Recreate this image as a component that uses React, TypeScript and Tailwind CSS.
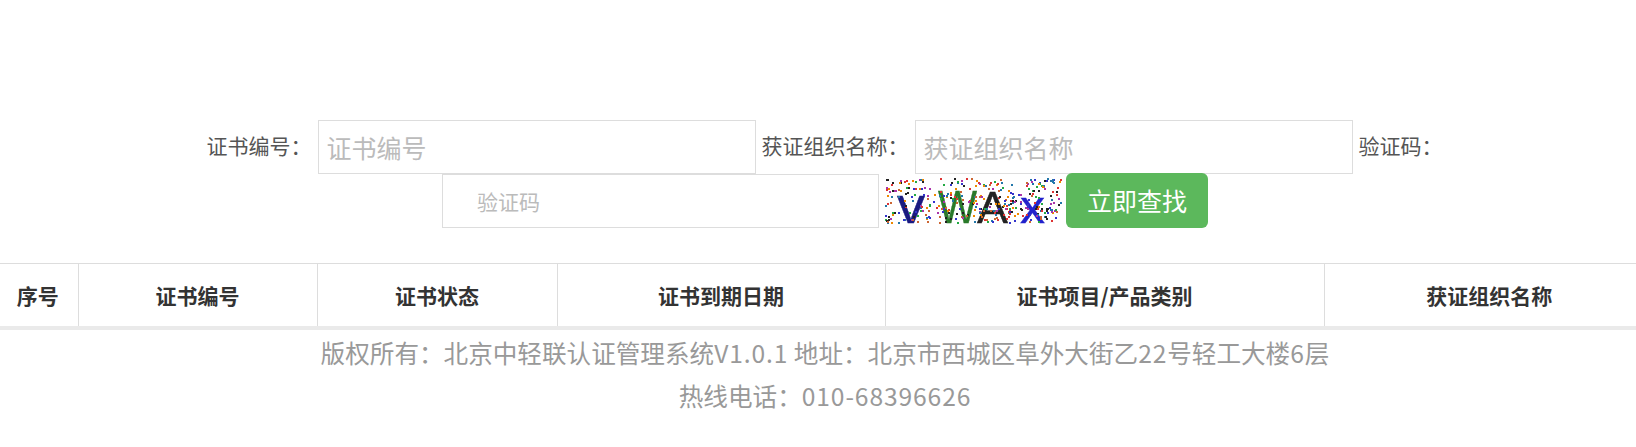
const dots: [number, number, string][] = (() => {
  const colors = ['#d33', '#27a', '#2a4', '#e80', '#a3a', '#222', '#33c', '#c63'];
  let s = 7;
  const r = () => ((s = (s * 16807) % 2147483647) / 2147483647);
  const out: [number, number, string][] = [];
  for (let i = 0; i < 360; i++) out.push([Math.floor(r() * 176), Math.floor(r() * 45), colors[Math.floor(r() * 8)]]);
  return out;
})();

function Captcha() {
  return (
    <svg width="177" height="46" viewBox="0 0 177 46" className="block shrink-0 self-center blur-[0.5px]">
      <g fontFamily="'Liberation Sans', sans-serif" strokeWidth="0.4">
        <text x="12" y="45" fill="#1a1a80" stroke="#1a1a80" fontSize="50" textLength="28" lengthAdjust="spacingAndGlyphs">v</text>
        <text x="53" y="45" fill="#2a7a2a" stroke="#2a7a2a" fontSize="46" textLength="39" lengthAdjust="spacingAndGlyphs">W</text>
        <text x="92" y="45" fill="#222" stroke="#222" fontSize="44" textLength="31" lengthAdjust="spacingAndGlyphs">A</text>
        <text x="135" y="45" fill="#2222cc" stroke="#2222cc" fontSize="46" textLength="25" lengthAdjust="spacingAndGlyphs">x</text>
      </g>
      {dots.map(([x, y, c], i) => (
        <rect key={i} x={x} y={y} width="2" height="2" fill={c} />
      ))}
    </svg>
  );
}

function Field({ label, placeholder, labelClass }: { label: string; placeholder: string; labelClass: string }) {
  return (
    <>
      <label className={`text-[21px] leading-[50px] h-[53px] whitespace-nowrap text-[#555] ${labelClass}`}>{label}</label>
      <input
        placeholder={placeholder}
        className="w-[438px] h-[54px] border border-[#ddd] px-2 text-[25px] placeholder:text-[#bbb] outline-none"
      />
    </>
  );
}

const cols = [
  ['序号', 'w-[78px] pr-[2px]'],
  ['证书编号', 'w-[239px]'],
  ['证书状态', 'w-[240px]'],
  ['证书到期日期', 'w-[328px]'],
  ['证书项目/产品类别', 'w-[439px]'],
  ['获证组织名称', 'w-[330px]'],
];

function Num({ children }: { children: string }) {
  return <span className="tracking-[0.9px]">{children}</span>;
}

export default function App() {
  return (
    <div className="w-[1636px] h-[447px] overflow-hidden bg-white font-['Noto_Sans_CJK_SC','Noto_Sans',sans-serif]">
      <form className="pt-[120px] flex flex-wrap justify-center h-[263px] content-start">
        <div className="flex ml-[34px]">
          <Field label={'证书编号\uFF1A'} placeholder="证书编号" labelClass="w-[111px]" />
          <Field label={'获证组织名称\uFF1A'} placeholder="获证组织名称" labelClass="w-[159px] pl-[6px]" />
          <label className="text-[21px] leading-[50px] w-[111px] pl-[6px] whitespace-nowrap text-[#555]">{'验证码\uFF1A'}</label>
        </div>
        <div className="flex ml-[14px]">
          <input
            placeholder="验证码"
            className="w-[437px] h-[54px] border border-[#ddd] pl-[34px] text-[21px] placeholder:text-[#bbb] outline-none"
          />
          <div className="ml-[6px] mr-[4px] flex">
            <Captcha />
          </div>
          <button type="button" className="w-[142px] h-[55px] -mt-px rounded-md bg-[#5cb85c] text-white text-[25px]">
            立即查找
          </button>
        </div>
      </form>
      <table className="w-[1654px] table-fixed border-collapse border-t border-[#ddd]">
        <thead>
          <tr className="h-[64px] border-b-[4px] border-[#eaeaea]">
            {cols.map(([t, w], i) => (
              <th key={t} className={`${w} pt-px text-[21px] font-bold text-[#333] text-center ${i < 5 ? 'border-r border-[#ddd]' : ''}`}>
                {t}
              </th>
            ))}
          </tr>
        </thead>
      </table>
      <footer className="w-[1650px] text-center text-[24.6px] leading-[42px] text-[#999] pt-px">
        <p>
          {'版权所有\uFF1A北京中轻联认证管理系统'}
          <Num>V1.0.1</Num>
          {' 地址\uFF1A北京市西城区阜外大街乙'}
          <Num>22</Num>
          {'号轻工大楼'}
          <Num>6</Num>
          {'层'}
        </p>
        <p className="pt-px">
          {'热线电话\uFF1A'}
          <Num>010-68396626</Num>
        </p>
      </footer>
    </div>
  );
}
